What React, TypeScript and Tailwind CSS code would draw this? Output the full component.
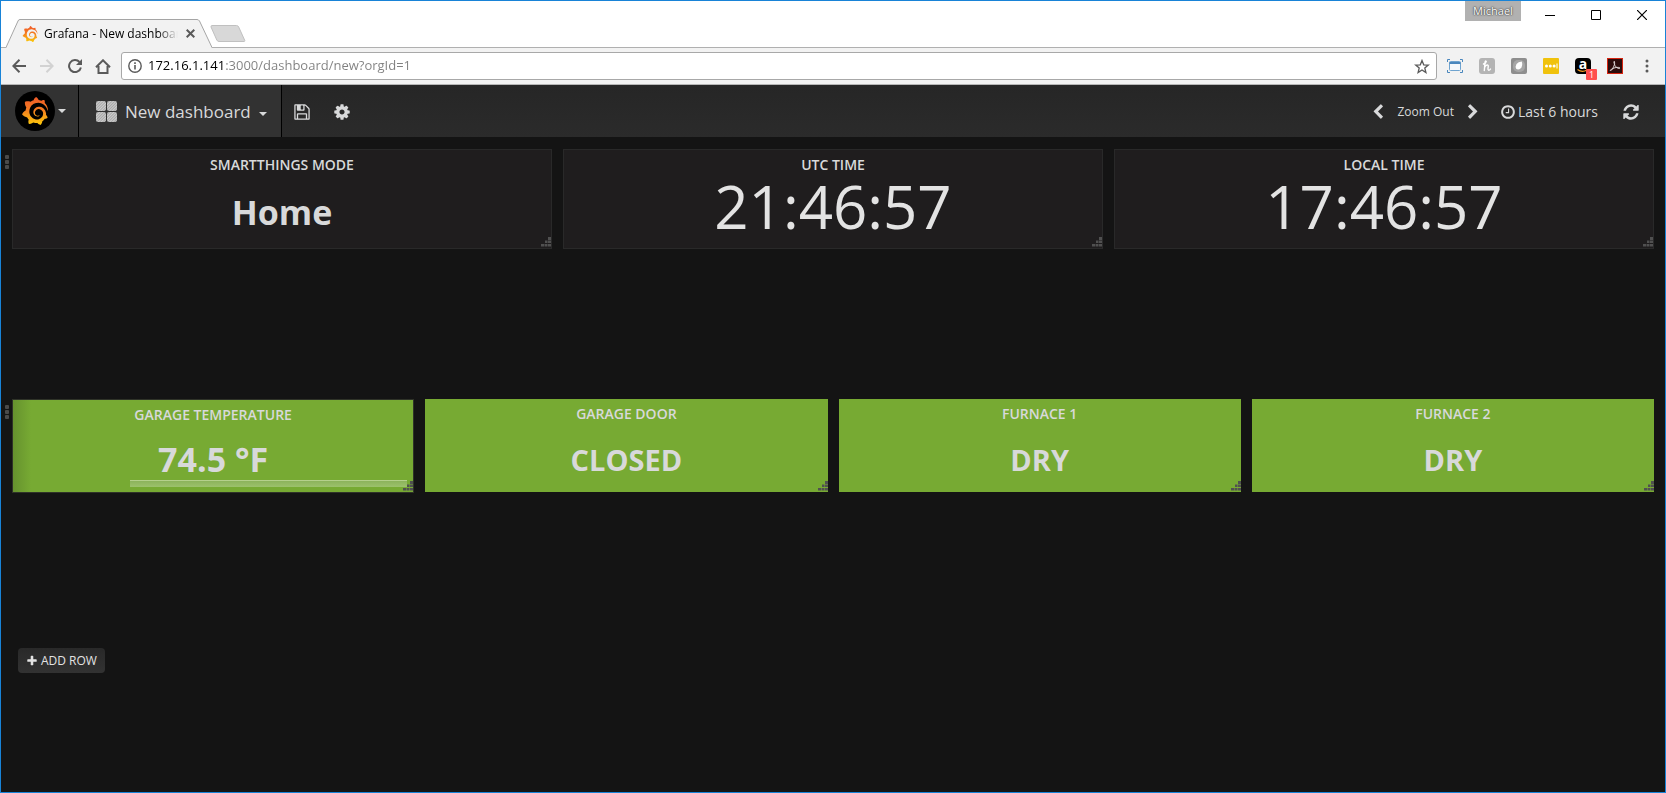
import * as React from "react";
import clsx from "clsx";
import { SiGrafana } from "react-icons/si";

const SAVE_PATH =
  "M512 1536h768v-384h-768v384zm896 0h128v-896q0-14-10-38.5t-20-34.5l-281-281q-10-10-34-20t-39-10v416q0 40-28 68t-68 28h-576q-40 0-68-28t-28-68v-416h-128v1280h128v-416q0-40 28-68t68-28h832q40 0 68 28t28 68v416zm-384-928v-320q0-13-9.5-22.5t-22.5-9.5h-192q-13 0-22.5 9.5t-9.5 22.5v320q0 13 9.5 22.5t22.5 9.5h192q13 0 22.5-9.5t9.5-22.5zm640 32v928q0 40-28 68t-68 28h-1344q-40 0-68-28t-28-68v-1344q0-40 28-68t68-28h928q40 0 88 20t76 48l280 280q28 28 48 76t20 88z";

const COG_PATH =
  "M1152 896q0-106-75-181t-181-75-181 75-75 181 75 181 181 75 181-75 75-181zm512-109v222q0 12-8 23t-20 13l-185 28q-19 54-39 91 35 50 107 138 10 12 10 25t-9 23q-27 37-99 108t-94 71q-12 0-26-9l-138-108q-44 23-91 38-16 136-29 186-7 28-36 28h-222q-14 0-24.5-8.5t-11.5-21.5l-28-184q-49-16-90-37l-141 107q-10 9-25 9-14 0-25-11-126-114-165-168-7-10-7-23 0-12 8-23 15-21 51-66.5t54-70.5q-27-50-41-99l-183-27q-13-2-21-12.5t-8-23.5v-222q0-12 8-23t19-13l186-28q14-46 39-92-40-57-107-138-10-12-10-24 0-10 9-23 26-36 98.5-107.5t94.5-71.5q13 0 26 10l138 107q44-23 91-38 16-136 29-186 7-28 36-28h222q14 0 24.5 8.5t11.5 21.5l28 184q49 16 90 37l142-107q9-9 24-9 13 0 25 10 129 119 165 170 7 8 7 22 0 12-8 23-15 21-51 66.5t-54 70.5q26 50 41 98l183 28q13 2 21 12.5t8 23.5z";

const CLOCK_PATH =
  "M1024 544v448q0 14-9 23t-23 9h-320q-14 0-23-9t-9-23v-64q0-14 9-23t23-9h224v-352q0-14 9-23t23-9h64q14 0 23 9t9 23zm416 352q0-148-73-273t-198-198-273-73-273 73-198 198-73 273 73 273 198 198 273 73 273-73 198-198 73-273zm224 0q0 209-103 385.5t-279.5 279.5-385.5 103-385.5-103-279.5-279.5-103-385.5 103-385.5 279.5-279.5 385.5-103 385.5 103 279.5 279.5 103 385.5z";

const REFRESH_PATH =
  "M1639 1056q0 5-1 7-64 268-268 434.5t-478 166.5q-146 0-282.5-55t-243.5-157l-129 129q-19 19-45 19t-45-19-19-45v-448q0-26 19-45t45-19h448q26 0 45 19t19 45-19 45l-137 137q71 66 161 102t187 36q134 0 250-65t186-179q11-17 53-117 8-23 30-23h192q13 0 22.5 9.5t9.5 22.5zm25-800v448q0 26-19 45t-45 19h-448q-26 0-45-19t-19-45 19-45l138-138q-148-137-349-137-134 0-250 65t-186 179q-11 17-53 117-8 23-30 23h-199q-13 0-22.5-9.5t-9.5-22.5v-7q65-268 270-434.5t480-166.5q146 0 284 55.5t245 156.5l130-129q19-19 45-19t45 19 19 45z";

const PLUS_PATH =
  "M1600 736v192q0 40-28 68t-68 28h-416v416q0 40-28 68t-68 28h-192q-40 0-68-28t-28-68v-416h-416q-40 0-68-28t-28-68v-192q0-40 28-68t68-28h416v-416q0-40 28-68t68-28h192q40 0 68 28t28 68v416h416q40 0 68 28t28 68z";

const CHEVRON_LEFT_PATH =
  "M1427 301l-531 531 531 531q19 19 19 45t-19 45l-166 166q-19 19-45 19t-45-19l-742-742q-19-19-19-45t19-45l742-742q19-19 45-19t45 19l166 166q19 19 19 45t-19 45z";

const CHEVRON_RIGHT_PATH =
  "M1363 877l-742 742q-19 19-45 19t-45-19l-166-166q-19-19-19-45t19-45l531-531-531-531q-19-19-19-45t19-45l166-166q19-19 45-19t45 19l742 742q19 19 19 45t-19 45z";

function Glyph({ path, className }: { path: string; className?: string }) {
  return (
    <svg viewBox="0 0 1792 1792" fill="currentColor" className={clsx("shrink-0", className)} aria-hidden>
      <path d={path} />
    </svg>
  );
}

function Caret() {
  return (
    <svg width={8} height={4} viewBox="0 0 8 4" fill="currentColor" aria-hidden>
      <path d="M0 0H8L4 4Z" />
    </svg>
  );
}

/** Shared gradient for both Grafana marks */
function GrafanaGradient() {
  return (
    <svg width={0} height={0} className="absolute" aria-hidden>
      <defs>
        <linearGradient id="grafana" x1="0" y1="0" x2="0" y2="1">
          <stop offset="0" stopColor="#f05a28" />
          <stop offset="0.45" stopColor="#f47b22" />
          <stop offset="1" stopColor="#fbca0a" />
        </linearGradient>
      </defs>
    </svg>
  );
}

function BrowserTab() {
  return (
    <div className="relative flex h-[29px] w-[206px] items-center pr-3.5 pl-4">
      <svg viewBox="0 0 206 29" className="absolute inset-0 h-[29px] w-[206px]" aria-hidden>
        <path d="M0 29L12 2Q12.500 .5 14 .5H191Q192.500 .5 193.500 2L206 29Z" fill="#f2f2f2" />
        <path d="M0 28.500L12 2Q12.500 .5 14 .5H191Q192.500 .5 193.500 2L206 28.500" fill="none" stroke="#a5a5a5" />
      </svg>
      <SiGrafana className="relative size-4 shrink-0 fill-[url(#grafana)]" />
      <span className="relative ml-1.5 flex-1 overflow-hidden whitespace-nowrap bg-linear-to-r from-black from-85% to-transparent bg-clip-text text-xs text-transparent">
        Grafana - New dashboard
      </span>
      <button type="button" aria-label="Close tab" className="relative ml-1 flex size-4 items-center justify-center text-[#5a5a5a]">
        <svg width={9} height={9} viewBox="0 0 9 9" stroke="currentColor" strokeWidth={2} aria-hidden>
          <path d="M.7 .7L8.300 8.300M8.300 .7L.7 8.300" />
        </svg>
      </button>
    </div>
  );
}

function WindowControls() {
  return (
    <div className="flex items-start">
      <span className="h-5 w-14 bg-[#b1b1b1] text-center text-[11px] leading-5 text-white [text-shadow:0_0_2px_#333,0_0_1px_#222]">
        Michael
      </span>
      <div className="ml-1.5 flex h-7 text-black">
        <button type="button" aria-label="Minimize" className="flex w-[46px] items-center justify-center">
          <svg width={10} height={10} stroke="currentColor" aria-hidden>
            <path d="M0 5.500H10" />
          </svg>
        </button>
        <button type="button" aria-label="Maximize" className="flex w-[46px] items-center justify-center">
          <svg width={10} height={10} fill="none" stroke="currentColor" aria-hidden>
            <path d="M.5 .5H9.500V9.500H.5Z" />
          </svg>
        </button>
        <button type="button" aria-label="Close" className="flex w-[46px] items-center justify-center">
          <svg width={10} height={10} stroke="currentColor" strokeWidth={1.2} aria-hidden>
            <path d="M0 0L10 10M10 0L0 10" />
          </svg>
        </button>
      </div>
    </div>
  );
}

function ToolButton({ label, muted, children }: { label: string; muted?: boolean; children: React.ReactNode }) {
  return (
    <button
      type="button"
      aria-label={label}
      className={clsx("flex h-7 w-7 shrink-0 items-center justify-center", muted ? "text-[#d2d2d2]" : "text-[#5a5a5a]")}
    >
      {children}
    </button>
  );
}

function Extension({ label, children }: { label: string; children: React.ReactNode }) {
  return (
    <button type="button" aria-label={label} className="flex h-7 w-8 shrink-0 items-center justify-center">
      {children}
    </button>
  );
}

function Extensions() {
  return (
    <div className="flex items-center">
      <Extension label="Window resizer">
        <svg width={16} height={14} viewBox="0 0 16 14" fill="none" aria-hidden>
          <path d="M.5 3V.5H3M13 .5H15.500V3M15.500 11V13.500H13M3 13.500H.5V11" stroke="#4a87bd" />
          <rect x="2.500" y="2.500" width="11" height="9" rx="1" fill="#f4f8fb" stroke="#6ea3cf" />
          <path d="M2.500 4H13.500" stroke="#4a87bd" strokeWidth={2} />
        </svg>
      </Extension>
      <Extension label="Honey">
        <svg width={16} height={16} viewBox="0 0 16 16" fill="none" aria-hidden>
          <rect width="16" height="16" rx="3" fill="#b4b4b4" />
          <path
            d="M4.500 6Q6.800 5.500 7.200 3.500Q6.400 2.300 6 4.500L5.300 12.500M5.600 9.500Q6.500 7 8.200 7Q9.600 7 9.200 9Q8.600 11.800 9.600 12.200Q10.800 12.200 11.500 11"
            stroke="#fff"
            strokeWidth={1.4}
            strokeLinecap="round"
          />
        </svg>
      </Extension>
      <Extension label="Leaf">
        <svg width={16} height={16} viewBox="0 0 16 16" aria-hidden>
          <rect width="16" height="16" rx="2" fill="#8e8e8e" />
          <rect x="2" y="2" width="12" height="12" rx="5" fill="#a6a6a6" />
          <path d="M10.800 3.500Q12 8 9.500 10.500Q7.500 12.200 5.300 11Q4 8.500 5.500 6Q7.200 3.600 10.800 3.500Z" fill="#fff" />
        </svg>
      </Extension>
      <Extension label="Password manager">
        <svg width={16} height={16} viewBox="0 0 16 16" fill="#fff" aria-hidden>
          <rect width="16" height="16" rx="1" fill="#f0c20c" />
          <circle cx="3.500" cy="8" r="1.500" />
          <circle cx="7.300" cy="8" r="1.500" />
          <circle cx="11.100" cy="8" r="1.500" />
          <rect x="13.500" y="5.500" width="1" height="5" />
        </svg>
      </Extension>
      <Extension label="Amazon assistant, 1 alert">
        <span className="relative size-4 rounded-sm bg-black text-center font-['Open_Sans'] text-sm leading-3 font-bold text-white">
          a
          <svg viewBox="0 0 16 16" className="absolute inset-0 size-4" fill="none" aria-hidden>
            <path d="M2.500 11.500Q7 15 12 12" stroke="#f59b23" strokeWidth={1.200} />
          </svg>
          <span className="absolute top-[11px] left-[11px] h-[11px] w-[11px] rounded-[1px] bg-[#ff4f4f] text-[9px] leading-[11px] font-normal">
            1
          </span>
        </span>
      </Extension>
      <Extension label="Acrobat">
        <svg width={16} height={16} viewBox="0 0 16 16" fill="none" aria-hidden>
          <rect x=".5" y=".5" width="15" height="15" fill="#2b0b0b" stroke="#d6230f" />
          <path
            d="M7.500 3.500Q6.700 3 6.900 4.500Q7.500 8 10 9.800Q12.800 11.200 13 10Q12 8.800 8 9.700Q3.500 11 3.200 12.500Q4.500 13.300 6.600 8.900Q8.200 5.500 7.500 3.500Z"
            stroke="#d9d0d0"
          />
        </svg>
      </Extension>
      <Extension label="Menu">
        <svg width={4} height={14} viewBox="0 0 4 14" fill="#5a5a5a" aria-hidden>
          <circle cx="2" cy="2" r="1.500" />
          <circle cx="2" cy="7" r="1.500" />
          <circle cx="2" cy="12" r="1.500" />
        </svg>
      </Extension>
    </div>
  );
}

function BrowserChrome() {
  return (
    <header>
      <div className="flex h-[47px] items-start justify-between border-b border-[#b0b0b0] bg-white">
        <div className="flex pt-[18px] pl-[5px]">
          <BrowserTab />
          <button type="button" aria-label="New tab" className="-ml-0.5">
            <svg width={36} height={17} viewBox="0 0 36 17" fill="#d8d8d8" stroke="#c0c0c0" aria-hidden>
              <path d="M2 .5H26.500Q28 .5 28.700 2L34.800 15.500Q35 16.500 34 16.500H9Q7.500 16.500 6.800 15L1 2Q.8 .5 2 .5Z" />
            </svg>
          </button>
        </div>
        <WindowControls />
      </div>
      <div className="flex h-[37px] items-center border-b border-[#b6b6b6] bg-[#f2f2f2] pl-1">
        <ToolButton label="Back">
          <svg width={14} height={14} viewBox="0 0 14 14" fill="none" stroke="currentColor" strokeWidth={2} aria-hidden>
            <path d="M14 7H1.500M7.500 .7L1.300 7L7.500 13.300" />
          </svg>
        </ToolButton>
        <ToolButton label="Forward" muted>
          <svg width={14} height={14} viewBox="0 0 14 14" fill="none" stroke="currentColor" strokeWidth={2} aria-hidden>
            <path d="M0 7H12.500M6.500 .7L12.700 7L6.500 13.300" />
          </svg>
        </ToolButton>
        <ToolButton label="Reload">
          <svg width={14} height={14} viewBox="0 0 14 14" fill="none" aria-hidden>
            <path d="M11.500 3A6 6 0 1 0 12.900 8.500" stroke="currentColor" strokeWidth={2} />
            <path d="M14 0V6H8Z" fill="currentColor" />
          </svg>
        </ToolButton>
        <ToolButton label="Home">
          <svg width={16} height={15} viewBox="0 0 16 15" fill="none" stroke="currentColor" strokeWidth={2} aria-hidden>
            <path d="M1 8.300L8 1.300L15 8.300M3.500 7V14H12.500V7" />
          </svg>
        </ToolButton>
        <label className="ml-1 flex h-7 flex-1 items-center rounded-[3px] border border-[#a8a8a8] bg-white pr-1.5 pl-1.5">
          <svg width={14} height={14} viewBox="0 0 14 14" fill="none" className="text-[#5a5a5a]" aria-hidden>
            <circle cx="7" cy="7" r="6.200" stroke="currentColor" strokeWidth={1.4} />
            <path d="M7 6V10.500M7 3.300V5" stroke="currentColor" strokeWidth={1.600} />
          </svg>
          <input
            type="text"
            aria-label="Address"
            defaultValue="172.16.1.141:3000/dashboard/new?orgId=1"
            className="ml-1.5 flex-1 bg-[linear-gradient(90deg,#000_77px,#808080_77px)] bg-clip-text text-[13px] text-transparent outline-none"
          />
          <svg width={16} height={15} viewBox="0 0 16 15" fill="none" stroke="#5a5a5a" strokeWidth={1.300} aria-hidden>
            <path d="M8 1.500L9.700 5.800L14.300 6.100L10.800 9L11.900 13.500L8 11L4.100 13.500L5.200 9L1.700 6.100L6.300 5.800Z" />
          </svg>
        </label>
        <div className="mr-0.5 ml-0.5">
          <Extensions />
        </div>
      </div>
    </header>
  );
}

function DashboardIcon() {
  return (
    <svg width={21} height={21} viewBox="0 0 21 21" aria-hidden>
      <defs>
        <pattern id="hatch" width="2" height="2" patternUnits="userSpaceOnUse" patternTransform="rotate(45)">
          <rect width="2" height="2" fill="#a8a8a8" />
          <rect width="1" height="2" fill="#cecece" />
        </pattern>
      </defs>
      <g fill="url(#hatch)">
        <rect width="10" height="10" rx="2" />
        <rect x="11" width="10" height="10" rx="2" />
        <rect y="11" width="10" height="10" rx="2" />
        <rect x="11" y="11" width="10" height="10" rx="2" />
      </g>
    </svg>
  );
}

function NavBar() {
  return (
    <nav className="flex h-[52px] items-stretch bg-linear-to-b from-[#262626] to-[#2b2b2b] pt-px text-[#d8d9da]">
      <button type="button" aria-label="Main menu" className="-mt-px flex items-center gap-[3px] border-r border-black bg-[#323232] pr-3 pl-3.5">
        <span className="flex size-10 items-center justify-center rounded-full bg-black">
          <SiGrafana className="size-7 fill-[url(#grafana)]" />
        </span>
        <Caret />
      </button>
      <button type="button" className="-mt-px flex items-center border-r border-black bg-[#323232] pt-px pr-3.5 pl-[17px] text-[17px]">
        <DashboardIcon />
        <span className="mr-2 ml-2">New dashboard</span>
        <span className="pt-1">
          <Caret />
        </span>
      </button>
      <button type="button" aria-label="Save dashboard" className="flex w-10 items-center justify-center">
        <Glyph path={SAVE_PATH} className="size-[18px]" />
      </button>
      <button type="button" aria-label="Settings" className="flex w-10 items-center justify-center">
        <Glyph path={COG_PATH} className="size-[18px]" />
      </button>
      <div className="flex flex-1 items-center justify-end pr-[25px]">
        <button type="button" aria-label="Shift time back" className="px-[11px]">
          <Glyph path={CHEVRON_LEFT_PATH} className="size-4" />
        </button>
        <button type="button" className="text-xs">
          Zoom Out
        </button>
        <button type="button" aria-label="Shift time forward" className="px-[11px]">
          <Glyph path={CHEVRON_RIGHT_PATH} className="size-4" />
        </button>
        <button type="button" className="ml-2 flex items-center gap-0.5 text-sm">
          <Glyph path={CLOCK_PATH} className="size-4" />
          Last 6 hours
        </button>
        <button type="button" aria-label="Refresh" className="ml-6">
          <Glyph path={REFRESH_PATH} className="size-[18px]" />
        </button>
      </div>
    </nav>
  );
}

function ResizeHandle() {
  return (
    <svg width={10} height={10} viewBox="0 0 10 10" fill="#505050" className="absolute right-0 bottom-px" aria-hidden>
      <path d="M7 0h3v3h-3zM4 3.500h2.500v2.500H4zM7 3.500h3v2.500H7zM0 7h3v2.500H0zM3.500 7h3v2.500h-3zM7 7h3v2.500H7z" />
    </svg>
  );
}

function RowHandle() {
  return (
    <button type="button" aria-label="Row menu" className="flex w-[11px] flex-col items-center gap-px self-start pt-1.5">
      <span className="size-1 rounded-[1px] bg-[#4a4a4a]" />
      <span className="size-1 rounded-[1px] bg-[#4a4a4a]" />
      <span className="size-1 rounded-[1px] bg-[#4a4a4a]" />
    </button>
  );
}

interface PanelProps {
  title: string;
  value: string;
  kind: "text" | "clock" | "gauge" | "status";
}

function Panel({ title, value, kind }: PanelProps) {
  const dark = kind === "text" || kind === "clock";

  return (
    <section
      className={clsx(
        "relative flex flex-col items-center",
        dark && "h-[100px] border border-[#292929] bg-[#1f1d1e]",
        kind === "gauge" &&
          "h-[94px] border border-[#2f3328] bg-[#77aa33] bg-[linear-gradient(90deg,#66922e_0,#77aa33_18px)]",
        kind === "status" && "h-[93px] bg-[#77aa33]",
      )}
    >
      <h2 className="pt-1 text-sm leading-[22px] font-semibold text-[#d8d9da]">{title}</h2>
      <p
        className={clsx(
          "flex flex-1 items-center whitespace-nowrap",
          kind === "text" && "text-[34px] leading-10 font-bold text-[#d8d9da]",
          kind === "clock" && "pb-3 text-6xl leading-[48px] text-[#e3e3e3]",
          kind === "gauge" && "text-[34px] leading-10 font-bold text-[#d8d9da]",
          kind === "status" && "pt-0.5 text-[29px] leading-10 font-bold text-[#d8d9da]",
        )}
      >
        {value}
      </p>
      {kind === "gauge" && (
        <div className="absolute right-1.5 bottom-[5px] left-[117px] h-[7px] border-t border-[#b5d08c] bg-linear-to-b from-[#8cb35b] to-[#9cc16c]" />
      )}
      <ResizeHandle />
    </section>
  );
}

export default function App() {
  return (
    <div className="flex min-h-screen flex-col border border-[#1883d7] bg-[#141414] font-['Open_Sans',sans-serif]">
      <GrafanaGradient />
      <BrowserChrome />
      <NavBar />
      <main className="flex flex-col pt-3 pr-[11px]">
        <div className="flex min-h-[250px] items-start">
          <RowHandle />
          <div className="grid flex-1 grid-cols-3 gap-[11px]">
            <Panel kind="text" title="SMARTTHINGS MODE" value="Home" />
            <Panel kind="clock" title="UTC TIME" value="21:46:57" />
            <Panel kind="clock" title="LOCAL TIME" value="17:46:57" />
          </div>
        </div>
        <div className="flex min-h-[249px] items-start">
          <RowHandle />
          <div className="grid flex-1 grid-cols-4 items-start gap-[11px]">
            <Panel kind="gauge" title="GARAGE TEMPERATURE" value="74.5 °F" />
            <Panel kind="status" title="GARAGE DOOR" value="CLOSED" />
            <Panel kind="status" title="FURNACE 1" value="DRY" />
            <Panel kind="status" title="FURNACE 2" value="DRY" />
          </div>
        </div>
        <button
          type="button"
          className="ml-[17px] flex h-[25px] items-center gap-[3px] self-start rounded-sm bg-linear-to-b from-[#292929] to-[#323232] px-2 text-xs text-[#e3e3e3]"
        >
          <Glyph path={PLUS_PATH} className="size-3" />
          ADD ROW
        </button>
      </main>
    </div>
  );
}
